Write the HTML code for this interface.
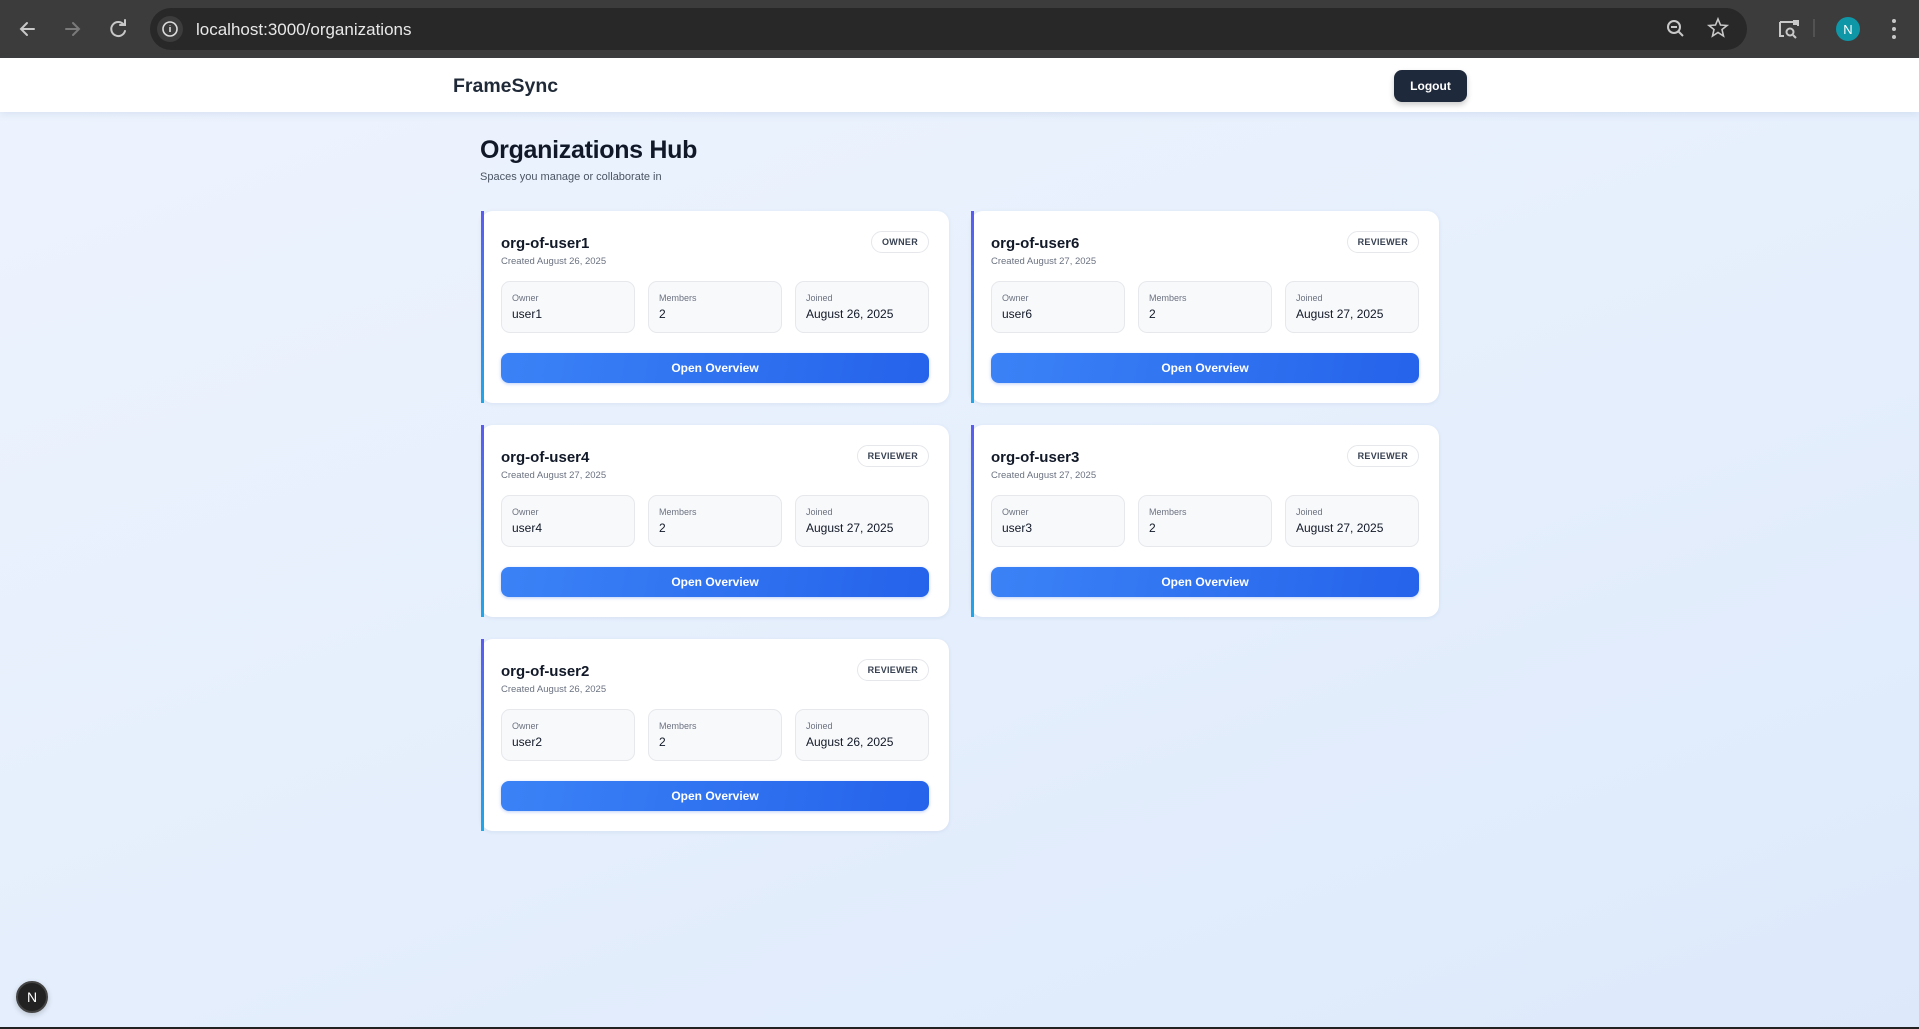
<!DOCTYPE html>
<html><head><meta charset="utf-8"><style>
*{box-sizing:border-box;margin:0;padding:0}
body{width:1919px;height:1029px;overflow:hidden;font-family:"Liberation Sans",sans-serif;background:linear-gradient(160deg,#eef4fe 0%,#e4eefc 60%,#dde9fb 100%);position:relative}
.abs{position:absolute}
.chrome{left:0;top:0;width:1919px;height:58px;background:#3c3c3c}
.pill{left:150px;top:8px;width:1597px;height:42px;border-radius:21px;background:#282828}
.nav{left:0;top:58px;width:1919px;height:54px;background:#fff;box-shadow:0 2px 8px rgba(60,100,160,.12)}
.card{position:absolute;width:468px;height:192px;background:#fff;border-radius:12px;box-shadow:0 1px 4px rgba(30,60,120,.08)}
.card .bar{position:absolute;left:0;top:0;width:3px;height:192px;background:linear-gradient(#5b5bf0,#1fa7e8)}
.card h3{position:absolute;left:20px;top:24px;font-size:15px;font-weight:bold;color:#111827}
.card .cr{position:absolute;left:20px;top:45px;font-size:9.5px;color:#6b7280}
.badge{position:absolute;right:20px;top:20px;height:22px;padding:0 10px;border:1px solid #e5e7eb;border-radius:11px;font-size:9px;font-weight:bold;color:#374151;line-height:20px;letter-spacing:.3px}
.st{position:absolute;top:70px;width:134px;height:52px;background:#f8f9fb;border:1px solid #e6e8ec;border-radius:9px}
.st .l{position:absolute;left:10px;top:11px;font-size:9px;color:#6b7280}
.st .v{position:absolute;left:10px;top:25px;font-size:12px;color:#111827}
.btn{position:absolute;left:20px;top:142px;width:428px;height:30px;border-radius:8px;background:linear-gradient(100deg,#3b82f6,#2563eb);color:#fff;font-size:12px;font-weight:bold;text-align:center;line-height:31px;box-shadow:0 1px 3px rgba(37,99,235,.3)}
</style></head><body>
<div class="abs chrome"></div>
<div class="abs pill"></div>
<svg class="abs" style="left:0;top:0" width="1919" height="58">
<g stroke="#c8c8c8" stroke-width="2" fill="none" stroke-linecap="round">
<path d="M34 29H21M27 23l-6 6 6 6"/>
<path d="M66 29h13M73 23l6 6-6 6" stroke="#7a7a7a"/>
<path d="M124 25a7 7 0 1 0 1 6"/><path d="M125 20v5h-5"/>
</g>
<circle cx="170" cy="29" r="13" fill="#3c3c3c"/>
<circle cx="170" cy="29" r="7" stroke="#ddd" stroke-width="1.6" fill="none"/>
<path d="M170 27v5M170 25v.5" stroke="#ddd" stroke-width="1.6"/>
<text x="196" y="35" fill="#e8e8e8" font-size="17" font-family="Liberation Sans">localhost:3000/organizations</text>
<g stroke="#c8c8c8" stroke-width="2" fill="none">
<circle cx="1674" cy="27" r="6"/><path d="M1678 31l5 5M1671 27h6"/>
<path d="M1718 19l2.5 6 6.5.5-5 4 1.5 6.5-5.5-3.5-5.5 3.5 1.5-6.5-5-4 6.5-.5z" stroke-width="1.6"/>
<path d="M1780 22v14h4M1780 22h18v4"/><circle cx="1790" cy="32" r="3.5"/><path d="M1793 35l3 3"/>
</g>
<rect x="1793" y="20" width="6" height="5" fill="#c8c8c8"/>
<path d="M1814 19v18" stroke="#5a5a5a" stroke-width="1.5"/>
<circle cx="1848" cy="29" r="12" fill="#0f97a8"/>
<text x="1848" y="34" fill="#fff" font-size="13" text-anchor="middle" font-family="Liberation Sans">N</text>
<g fill="#c8c8c8"><circle cx="1894" cy="21" r="2"/><circle cx="1894" cy="29" r="2"/><circle cx="1894" cy="37" r="2"/></g>
</svg>
<div class="abs nav"></div>
<div class="abs" style="left:453px;top:75px;font-size:19.5px;font-weight:bold;color:#1f2937">FrameSync</div>
<div class="abs" style="left:1394px;top:70px;width:73px;height:32px;border-radius:8px;background:#1e293b;color:#fff;font-size:12px;font-weight:bold;text-align:center;line-height:32px;box-shadow:0 3px 6px rgba(0,0,0,.2)">Logout</div>
<div class="abs" style="left:480px;top:136px;font-size:25px;font-weight:bold;color:#111827;letter-spacing:-.3px">Organizations Hub</div>
<div class="abs" style="left:480px;top:171px;font-size:11px;color:#4b5563">Spaces you manage or collaborate in</div>

<div class="card" style="left:481px;top:211px"><div class="bar"></div><h3>org-of-user1</h3><div class="cr">Created August 26, 2025</div><div class="badge">OWNER</div>
<div class="st" style="left:20px"><div class="l">Owner</div><div class="v">user1</div></div>
<div class="st" style="left:167px"><div class="l">Members</div><div class="v">2</div></div>
<div class="st" style="left:314px"><div class="l">Joined</div><div class="v">August 26, 2025</div></div>
<div class="btn">Open Overview</div></div>

<div class="card" style="left:971px;top:211px"><div class="bar"></div><h3>org-of-user6</h3><div class="cr">Created August 27, 2025</div><div class="badge">REVIEWER</div>
<div class="st" style="left:20px"><div class="l">Owner</div><div class="v">user6</div></div>
<div class="st" style="left:167px"><div class="l">Members</div><div class="v">2</div></div>
<div class="st" style="left:314px"><div class="l">Joined</div><div class="v">August 27, 2025</div></div>
<div class="btn">Open Overview</div></div>

<div class="card" style="left:481px;top:425px"><div class="bar"></div><h3>org-of-user4</h3><div class="cr">Created August 27, 2025</div><div class="badge">REVIEWER</div>
<div class="st" style="left:20px"><div class="l">Owner</div><div class="v">user4</div></div>
<div class="st" style="left:167px"><div class="l">Members</div><div class="v">2</div></div>
<div class="st" style="left:314px"><div class="l">Joined</div><div class="v">August 27, 2025</div></div>
<div class="btn">Open Overview</div></div>

<div class="card" style="left:971px;top:425px"><div class="bar"></div><h3>org-of-user3</h3><div class="cr">Created August 27, 2025</div><div class="badge">REVIEWER</div>
<div class="st" style="left:20px"><div class="l">Owner</div><div class="v">user3</div></div>
<div class="st" style="left:167px"><div class="l">Members</div><div class="v">2</div></div>
<div class="st" style="left:314px"><div class="l">Joined</div><div class="v">August 27, 2025</div></div>
<div class="btn">Open Overview</div></div>

<div class="card" style="left:481px;top:639px"><div class="bar"></div><h3>org-of-user2</h3><div class="cr">Created August 26, 2025</div><div class="badge">REVIEWER</div>
<div class="st" style="left:20px"><div class="l">Owner</div><div class="v">user2</div></div>
<div class="st" style="left:167px"><div class="l">Members</div><div class="v">2</div></div>
<div class="st" style="left:314px"><div class="l">Joined</div><div class="v">August 26, 2025</div></div>
<div class="btn">Open Overview</div></div>

<div class="abs" style="left:16px;top:981px;width:32px;height:32px;border-radius:50%;background:#222;border:2px solid #444;color:#fff;font-size:14px;text-align:center;line-height:28px;box-shadow:0 2px 6px rgba(0,0,0,.2)">N</div>
<div class="abs" style="left:0;top:1027px;width:1919px;height:2px;background:#222"></div>
</body></html>
